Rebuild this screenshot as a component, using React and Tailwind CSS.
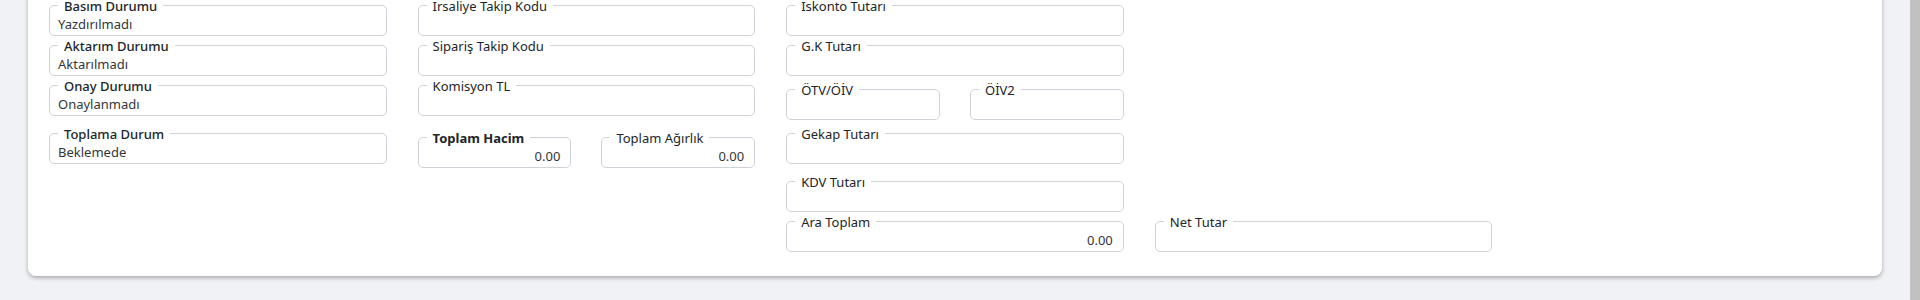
const fontStack = { fontFamily: '"Noto Sans", "Open Sans", Arial, sans-serif' };

function Field({ label, value, weight = "font-normal", align = "left", className = "" }) {
  return (
    <fieldset className={`rounded-[5px] border border-[#cfd3d9] px-[8px] pb-[1px] ${className}`}>
      <legend className={`ml-0 px-[6px] pt-[3px] text-[13px] leading-[15px] text-[#212529] ${weight}`}>
        {label}
      </legend>
      <div
        className={`h-[20px] text-[13px] leading-[20px] text-[#333639] ${
          align === "right" ? "pr-[2px] text-right" : ""
        }`}
      >
        {value}
      </div>
    </fieldset>
  );
}

export default function App() {
  return (
    <div className="flex h-[300px] w-full overflow-hidden bg-[#f1f2f6]" style={fontStack}>
      <div className="flex-1">
        <div className="mx-[28px] -mt-[4px] rounded-b-[8px] bg-white px-[21px] pb-[24px] shadow-[0_2px_4px_rgba(0,0,0,0.3)]">
          <div className="grid grid-cols-5 gap-x-[31px]">
            <div className="flex flex-col">
              <Field label="Basım Durumu" value="Yazdırılmadı" weight="font-medium" />
              <Field label="Aktarım Durumu" value="Aktarılmadı" weight="font-medium" />
              <Field label="Onay Durumu" value="Onaylanmadı" weight="font-medium" />
              <Field label="Toplama Durum" value="Beklemede" weight="font-medium" className="mt-[8px]" />
            </div>
            <div className="flex flex-col">
              <Field label="Irsaliye Takip Kodu" />
              <Field label="Sipariş Takip Kodu" />
              <Field label="Komisyon TL" />
              <div className="mt-[12px] grid grid-cols-2 gap-x-[30px]">
                <Field label="Toplam Hacim" value="0.00" align="right" weight="font-bold" />
                <Field label="Toplam Ağırlık" value="0.00" align="right" />
              </div>
            </div>
            <div className="flex flex-col">
              <Field label="Iskonto Tutarı" />
              <Field label="G.K Tutarı" />
              <div className="mt-[4px] grid grid-cols-2 gap-x-[30px]">
                <Field label="ÖTV/ÖİV" />
                <Field label="ÖİV2" />
              </div>
              <Field label="Gekap Tutarı" className="mt-[4px]" />
              <Field label="KDV Tutarı" className="mt-[8px]" />
            </div>
            <div />
            <div />
            <div />
            <div />
            <Field label="Ara Toplam" value="0.00" align="right" />
            <Field label="Net Tutar" />
            <div />
          </div>
        </div>
      </div>
      <div className="w-[10px] bg-[#c1c1c1]" />
    </div>
  );
}
